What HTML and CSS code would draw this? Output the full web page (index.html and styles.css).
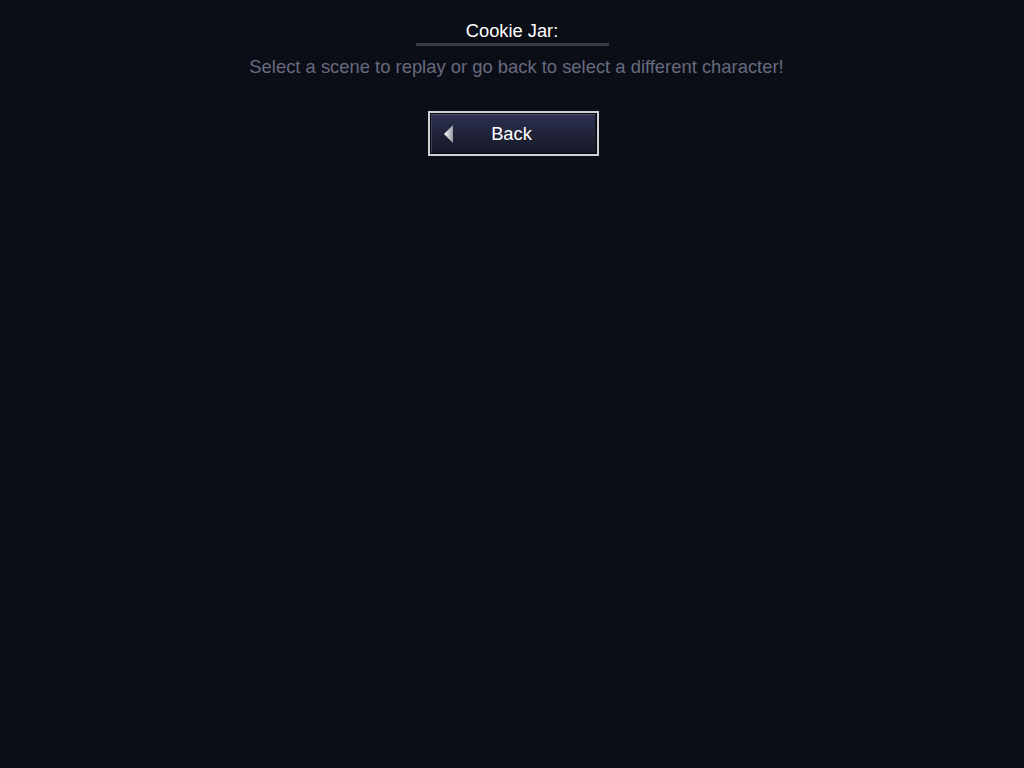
FILE: index.html
```html
<!DOCTYPE html>
<html>
<head>
<meta charset="utf-8">
<link rel="stylesheet" href="styles.css">
</head>
<body>
<main class="page">
  <h1 class="title">Cookie Jar:</h1>
  <p class="subtitle">Select a scene to replay or go back to select a different character!</p>
  <button class="back-btn">
    <span class="inner">
      <svg class="arrow" width="9" height="18" viewBox="0 0 9 18">
        <defs>
          <linearGradient id="ag" x1="0" y1="0" x2="1" y2="0">
            <stop offset="0" stop-color="#ffffff"/>
            <stop offset="1" stop-color="#9a9aa6"/>
          </linearGradient>
        </defs>
        <polygon points="9,0 0,9 9,18" fill="url(#ag)"/>
      </svg>
      <span class="label">Back</span>
    </span>
  </button>
</main>
</body>
</html>
```

FILE: styles.css
```css
html, body {
  margin: 0;
  padding: 0;
  height: 100%;
}
body {
  background: #0c0e17;
  font-family: "Liberation Sans", Arial, sans-serif;
}
.page {
  display: flex;
  flex-direction: column;
  align-items: center;
  padding-top: 19px;
}
.title {
  margin: 0;
  font-size: 18.3px;
  font-weight: normal;
  color: #ffffff;
  line-height: 24px;
  width: 193px;
  text-align: center;
  border-bottom: 3px solid #393b44;
}
.subtitle {
  margin: 10px 0 0 9px;
  font-size: 18.4px;
  line-height: 22px;
  color: #676a80;
}
.back-btn {
  margin-top: 33px;
  margin-left: 2px;
  width: 171px;
  height: 45px;
  padding: 0;
  border: 2px solid #cfcfd4;
  background: #0a0b10;
  cursor: pointer;
  display: flex;
}
.inner {
  flex: 1;
  margin: 1px;
  border-top: 1px solid #4a4f6a;
  border-left: 1px solid #3a3e58;
  border-right: 1px solid #15171f;
  border-bottom: 1px solid #15171f;
  background: linear-gradient(#2d3150, #1f2238 55%, #181a2b);
  display: flex;
  align-items: center;
}
.arrow {
  margin-left: 12px;
}
.label {
  flex: 1;
  text-align: center;
  font-size: 18.3px;
  color: #ffffff;
  margin-right: 24px;
}
```
